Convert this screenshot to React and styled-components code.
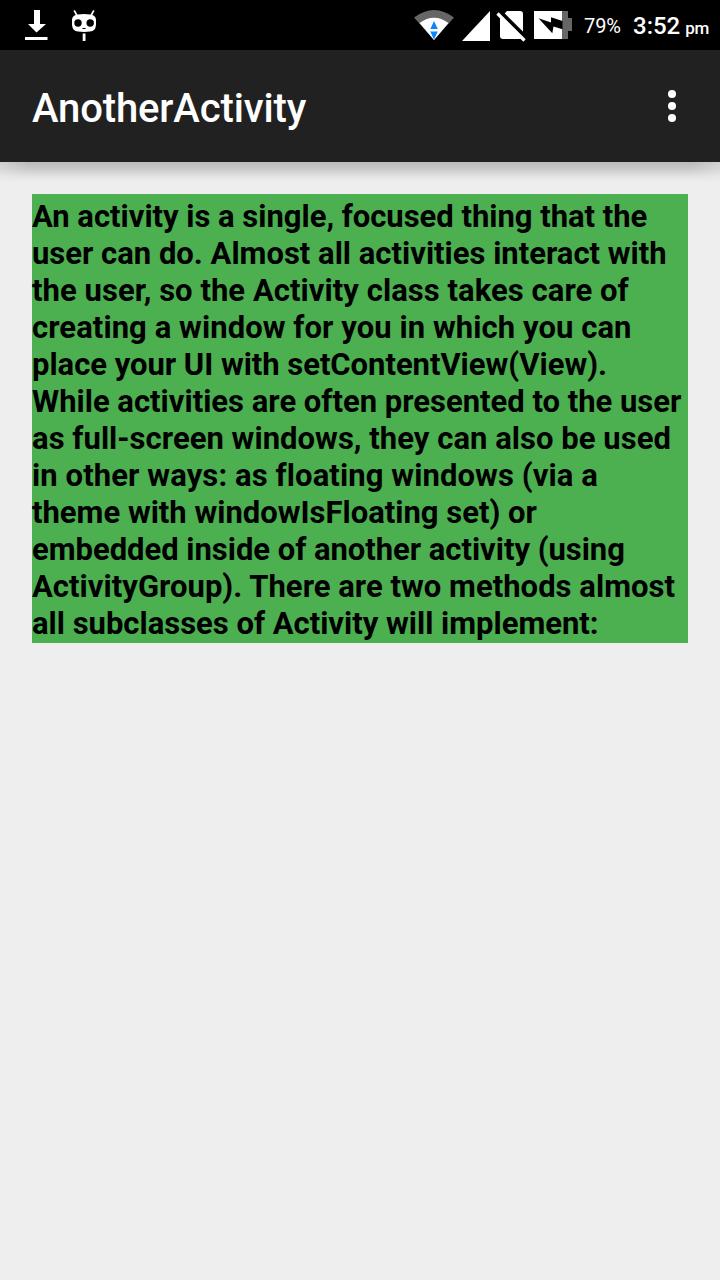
import React from "react";
import styled, { createGlobalStyle } from "styled-components";

const GlobalStyle = createGlobalStyle`
  * { box-sizing: border-box; }
  body {
    margin: 0;
    background: #eeeeee;
    font-family: Roboto, "Noto Sans", sans-serif;
  }
`;

const Screen = styled.div`
  display: flex;
  flex-direction: column;
  width: 720px;
  height: 1280px;
  overflow: hidden;
  background: #eeeeee;
`;

const StatusBar = styled.header`
  display: flex;
  flex: none;
  justify-content: space-between;
  height: 50px;
  background: #000;
  color: #fff;
`;

const StatusGroup = styled.div`
  display: flex;
  height: 50px;
`;

const Glyph = styled.svg`
  display: block;
  flex: none;
  width: ${({ $width }) => $width}px;
  height: 50px;
`;

const Battery = styled.span`
  width: 53px;
  padding-left: 8px;
  font-size: 20px;
  line-height: 53px;
  letter-spacing: -0.1px;
  white-space: nowrap;
`;

const Clock = styled.span`
  width: 91px;
  padding-left: 4px;
  font-size: 24px;
  font-weight: 500;
  line-height: 52px;
  white-space: nowrap;
`;

const Meridiem = styled.span`
  margin-left: 5px;
  font-size: 17px;
  letter-spacing: -0.3px;
`;

const AppBar = styled.div`
  display: flex;
  flex: none;
  align-items: center;
  justify-content: space-between;
  height: 112px;
  padding: 4px 32px 0;
  background: #212121;
  color: #fff;
`;

const Title = styled.h1`
  margin: 2px 0 0;
  font-size: 40px;
  font-weight: 500;
  line-height: 48px;
  letter-spacing: -0.13px;
`;

const MenuButton = styled.button`
  display: flex;
  flex-direction: column;
  align-items: center;
  gap: 4px;
  width: 32px;
  margin: 0 0 4px;
  padding: 0;
  border: 0;
  background: none;
`;

const Dot = styled.span`
  width: 8px;
  height: 8px;
  border-radius: 50%;
  background: #fff;
`;

const Shadow = styled.div`
  flex: none;
  height: 20px;
  background:
    linear-gradient(to right, rgba(238, 238, 238, 0.4), rgba(238, 238, 238, 0) 28px, rgba(238, 238, 238, 0) 692px, rgba(238, 238, 238, 0.4)),
    linear-gradient(#bababa, #cacaca 35%, #e2e2e2 70%, #eeeeee);
`;

const Content = styled.main`
  padding: 12px 32px;
`;

const Description = styled.p`
  margin: 0;
  padding: 4px 0 1px;
  background: #4caf50;
  color: #000;
  font-size: 31px;
  font-weight: 700;
  line-height: 37px;
  white-space: nowrap;
`;

const Line = styled.span`
  display: block;
  letter-spacing: ${({ $tracking }) => $tracking}px;
`;

const lines = [
  ["An activity is a single, focused thing that the", -0.02],
  ["user can do. Almost all activities interact with", 0],
  ["the user, so the Activity class takes care of", 0.05],
  ["creating a window for you in which you can", 0.07],
  ["place your UI with setContentView(View).", -0.03],
  ["While activities are often presented to the user", 0],
  ["as full-screen windows, they can also be used", 0.04],
  ["in other ways: as floating windows (via a", 0.1],
  ["theme with windowIsFloating set) or", 0],
  ["embedded inside of another activity (using", -0.03],
  ["ActivityGroup). There are two methods almost", 0.03],
  ["all subclasses of Activity will implement:", -0.01],
];

const NotificationIcons = () => (
  <Glyph $width={120} viewBox="0 0 120 50" fill="#fff">
    <path d="M34 10h6v14h6l-9.500 8.500L28 24h6zM25 37h22.500v3H25z" />
    <path d="M74.500 11l2.500 4.500M93.500 11L91 15.500" stroke="#fff" strokeWidth="1.600" strokeLinecap="round" />
    <path d="M78 14.500Q84 13.500 90 14.500Q95.500 15 96 19.500V25Q95.500 31 90 31.500Q84 32.300 78 31.500Q72.500 31 72 25V19.500Q72.500 15 78 14.500z" />
    <circle cx="78" cy="23" r="3.700" fill="#000" />
    <circle cx="90.200" cy="23" r="3.700" fill="#000" />
    <path d="M82.500 28.500h3" stroke="#000" strokeWidth="1" />
    <path d="M82.700 33.500h2.800v7.500h-2.800z" />
  </Glyph>
);

const SystemIcons = () => (
  <Glyph $width={162} viewBox="414 0 162 50" fill="#fff">
    <path d="M414 17.500Q434 2.500 454 17.500L434 40z" fill="#666" />
    <path d="M419.500 23Q434 12.500 448.500 23L434 40z" />
    <path d="M430.300 29L434 21l3.800 8zM430.300 31.500h7.500L434 39.500z" fill="#0a84ff" />
    <path d="M490 11v30h-28z" />
    <path d="M507 11h13q3 0 3 3v22q0 3-3 3h-17q-3 0-3-3V18z" />
    <path d="M499.500 11L528 39.500" stroke="#000" strokeWidth="4" />
    <path d="M497.500 13.500L524.500 40.500" stroke="#fff" strokeWidth="3.200" />
    <path d="M534 11h28v28h-28z" />
    <path d="M562 11h6v7h4v13h-4v8h-6z" fill="#666" />
    <path d="M538.500 18.300l12.500 4.200V17.300l11.500 3.700v8.200l-9-2.700-1.200 6.800z" fill="#000" />
  </Glyph>
);

export default function App() {
  return (
    <Screen>
      <GlobalStyle />
      <StatusBar>
        <NotificationIcons />
        <StatusGroup>
          <SystemIcons />
          <Battery>79%</Battery>
          <Clock>
            3:52<Meridiem>pm</Meridiem>
          </Clock>
        </StatusGroup>
      </StatusBar>
      <AppBar>
        <Title>AnotherActivity</Title>
        <MenuButton aria-label="More options">
          <Dot />
          <Dot />
          <Dot />
        </MenuButton>
      </AppBar>
      <Shadow />
      <Content>
        <Description>
          {lines.map(([text, tracking]) => (
            <Line key={text} $tracking={tracking}>{text}</Line>
          ))}
        </Description>
      </Content>
    </Screen>
  );
}
